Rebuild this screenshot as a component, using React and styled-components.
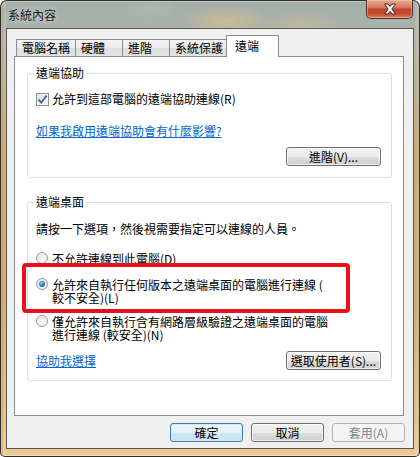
import styled, { createGlobalStyle } from "styled-components";

const Global = createGlobalStyle`
  html, body { margin: 0; padding: 0; overflow: hidden; background: #fff; }
  * { box-sizing: border-box; }
`;

const FONT = `"Noto Sans CJK TC", "Noto Sans", sans-serif`;

const tabs = [
  { label: "電腦名稱", w: 60 },
  { label: "硬體", w: 48 },
  { label: "進階", w: 48 },
  { label: "系統保護", w: 58 },
  { label: "遠端", w: 53, active: true },
];

// ventana con marco aero
export default function App() {
  return (
    <>
      <Global />
      <Window>
        <TitleBar>
          <Title>系統內容</Title>
          <CloseBtn>
            <svg width="14" height="12" viewBox="0 0 14 12">
              <path
                d="M1.5 1 L5 1 L7 3.6 L9 1 L12.5 1 L8.8 6 L12.5 11 L9 11 L7 8.4 L5 11 L1.5 11 L5.2 6 Z"
                fill="#fff"
                stroke="#3a2a2a"
                strokeWidth="1"
                strokeLinejoin="round"
              />
            </svg>
          </CloseBtn>
        </TitleBar>
        <Client>
          <TabRow>
            {tabs.map((t) => (
              <Tab key={t.label} $w={t.w} $active={t.active}>
                {t.label}
              </Tab>
            ))}
          </TabRow>
          <Panel>
            <Group>
              <GroupLabel>遠端協助</GroupLabel>
              <CheckRow>
                <CheckBox>
                  <svg width="11" height="11" viewBox="0 0 11 11">
                    <path
                      d="M1.5 5.5 L4.2 8.6 L9.6 1.6"
                      fill="none"
                      stroke="#4a5f9c"
                      strokeWidth="1.9"
                    />
                  </svg>
                </CheckBox>
                允許到這部電腦的遠端協助連線(R)
              </CheckRow>
              <Link $mt={18}>如果我啟用遠端協助會有什麼影響?</Link>
              <ButtonLine $mt={9}>
                <Btn $w={95}>進階(V)...</Btn>
              </ButtonLine>
            </Group>

            <Group $mt={24} $pb={10}>
              <GroupLabel>遠端桌面</GroupLabel>
              <Text $mt={13}>請按一下選項，然後視需要指定可以連線的人員。</Text>
              <Option $mt={16}>
                <Radio />
                <OptionText>不允許連線到此電腦(D)</OptionText>
              </Option>
              <Option $mt={12} $multi>
                <Radio $checked />
                <OptionText $multi>
                  <Line>允許來自執行任何版本之遠端桌面的電腦進行連線 (</Line>
                  <Line>較不安全)(L)</Line>
                </OptionText>
                <Highlight />
              </Option>
              <Option $mt={11} $multi>
                <Radio />
                <OptionText $multi>
                  <Line>僅允許來自執行含有網路層級驗證之遠端桌面的電腦</Line>
                  <Line>進行連線 (較安全)(N)</Line>
                </OptionText>
              </Option>
              <SplitLine $mt={10}>
                <Link>協助我選擇</Link>
                <Btn $w={95}>選取使用者(S)...</Btn>
              </SplitLine>
            </Group>
          </Panel>
          <Footer>
            <Btn $w={73} $primary>
              確定
            </Btn>
            <Btn $w={73}>取消</Btn>
            <Btn $w={73} disabled>
              套用(A)
            </Btn>
          </Footer>
        </Client>
      </Window>
    </>
  );
}

const Window = styled.div`
  width: 420px;
  height: 457px;
  display: flex;
  flex-direction: column;
  border: 1px solid rgba(35, 30, 25, 0.9);
  border-radius: 7px 7px 5px 5px;
  box-shadow: inset 0 0 0 1px rgba(255, 255, 255, 0.35);
  font-family: ${FONT};
  font-size: 12px;
  color: #000;
  background:
    radial-gradient(ellipse 45px 16px at 225px 20px, rgba(212, 188, 146, 0.85), transparent),
    radial-gradient(ellipse 40px 14px at 300px 24px, rgba(200, 186, 152, 0.7), transparent),
    radial-gradient(ellipse 30px 12px at 150px 8px, rgba(180, 190, 182, 0.6), transparent),
    linear-gradient(
      to right,
      rgba(120, 85, 40, 0.35) 0,
      rgba(255, 240, 200, 0.25) 3px,
      transparent 6px,
      transparent 413px,
      rgba(255, 240, 200, 0.25) 416px,
      rgba(120, 85, 40, 0.35) 100%
    ),
    linear-gradient(
      to bottom,
      #a2aea9 0,
      #a9b3ac 28px,
      #b0ac92 80px,
      #c6a16a 150px,
      #caa46a 300px,
      #dfbd84 420px,
      #ebcd97 100%
    );
`;

const TitleBar = styled.div`
  height: 27px;
  display: flex;
  justify-content: space-between;
  align-items: flex-start;
  padding-left: 7px;
`;

const Title = styled.div`
  margin-top: 7px;
  line-height: 14px;
  color: #1b1b1b;
  text-shadow: 0 0 6px rgba(255, 255, 255, 0.8);
`;

const CloseBtn = styled.div`
  width: 47px;
  height: 19px;
  margin: -1px 6px 0 0;
  display: flex;
  align-items: center;
  justify-content: center;
  border: 1px solid #4a2f2a;
  border-top: none;
  border-radius: 0 0 5px 5px;
  box-shadow: inset 0 0 0 1px rgba(255, 210, 190, 0.45);
  background: linear-gradient(
    to bottom,
    #e6a893 0,
    #d37b63 40%,
    #c2452a 52%,
    #c4492d 75%,
    #d8805f 100%
  );
`;

const Client = styled.div`
  flex: 1;
  margin: 0 5px 7px;
  border: 1px solid #5d564a;
  background: #f0f0f0;
  display: flex;
  flex-direction: column;
`;

const TabRow = styled.div`
  display: flex;
  align-items: flex-end;
  height: 21px;
  margin-top: 6px;
  padding-left: 9px;
  position: relative;
  z-index: 1;
`;

const Tab = styled.div`
  width: ${(p) => p.$w}px;
  height: ${(p) => (p.$active ? 22 : 17)}px;
  margin-bottom: ${(p) => (p.$active ? -1 : 0)}px;
  padding-left: ${(p) => (p.$active ? 8 : 5)}px;
  border: 1px solid #898c95;
  border-bottom: none;
  line-height: ${(p) => (p.$active ? 19 : 16)}px;
  white-space: nowrap;
  background: ${(p) =>
    p.$active
      ? "#fff"
      : "linear-gradient(to bottom, #f3f3f3 0, #ebebeb 50%, #dedede 51%, #e4e4e4 100%)"};
  & + & {
    margin-left: -1px;
  }
`;

const Panel = styled.div`
  height: 360px;
  margin: 0 9px 0 7px;
  border: 1px solid #898c95;
  background: #fff;
  padding: 16px 11px 0 12px;
  display: flex;
  flex-direction: column;
`;

const Group = styled.div`
  margin-top: ${(p) => p.$mt || 0}px;
  border: 1px solid #d5dfe5;
  border-radius: 3px;
  padding: 0 10px ${(p) => p.$pb ?? 11}px 8px;
  display: flex;
  flex-direction: column;
`;

const GroupLabel = styled.div`
  align-self: flex-start;
  margin: -8px 0 0 -2px;
  padding: 0 2px;
  background: #fff;
  line-height: 14px;
  height: 14px;
`;

const CheckRow = styled.div`
  display: flex;
  align-items: center;
  gap: 3px;
  margin-top: 12px;
  height: 14px;
  line-height: 14px;
`;

const CheckBox = styled.span`
  width: 13px;
  height: 13px;
  border: 1px solid #8e8f8f;
  background: linear-gradient(135deg, #dcdcdc 0, #f6f6f6 70%, #fff 100%);
  box-shadow: inset 0 0 0 1px #f4f4f4;
  display: flex;
  align-items: center;
  justify-content: center;
`;

const Link = styled.a`
  display: block;
  margin-top: ${(p) => p.$mt || 0}px;
  color: #0066cc;
  text-decoration: underline;
  text-underline-offset: 1px;
  line-height: 14px;
  cursor: pointer;
`;

const ButtonLine = styled.div`
  margin-top: ${(p) => p.$mt || 0}px;
  display: flex;
  justify-content: flex-end;
`;

const SplitLine = styled.div`
  margin-top: ${(p) => p.$mt || 0}px;
  display: flex;
  justify-content: space-between;
  align-items: center;
`;

const Text = styled.div`
  margin-top: ${(p) => p.$mt || 0}px;
  line-height: 14px;
`;

const Option = styled.div`
  position: relative;
  margin-top: ${(p) => p.$mt || 0}px;
  display: flex;
  align-items: flex-start;
  gap: 4px;
`;

const OptionText = styled.div`
  line-height: ${(p) => (p.$multi ? 13 : 14)}px;
  white-space: nowrap;
`;

const Line = styled.div`
  height: 13px;
`;

const Radio = styled.span`
  flex: none;
  position: relative;
  width: 12px;
  height: 12px;
  border-radius: 50%;
  border: 1px solid #9a9a9a;
  background: radial-gradient(circle at 60% 65%, #ffffff 0, #e8e8e8 55%, #cfcfcf 100%);
  box-shadow: inset 0 0 0 1px #f4f4f4;
  &::after {
    content: "";
    display: ${(p) => (p.$checked ? "block" : "none")};
    position: absolute;
    left: 2px;
    top: 2px;
    width: 6px;
    height: 6px;
    border-radius: 50%;
    background: radial-gradient(circle at 40% 35%, #8fd0f7 0, #2a78c0 50%, #163f7a 100%);
  }
`;

const Highlight = styled.span`
  position: absolute;
  left: -14px;
  top: -15px;
  width: 328px;
  height: 50px;
  border: 4px solid #e8121c;
  border-radius: 4px;
  pointer-events: none;
`;

const Footer = styled.div`
  display: flex;
  justify-content: flex-end;
  gap: 8px;
  padding: 7px 8px 0 0;
`;

const Btn = styled.button`
  width: ${(p) => p.$w}px;
  height: 19px;
  padding: 0;
  font-family: ${FONT};
  font-size: 12px;
  line-height: 15px;
  color: #000;
  border-radius: 3px;
  border: 1px solid ${(p) => (p.$primary ? "#3c7fb1" : "#707070")};
  box-shadow: inset 0 0 0 1px
    ${(p) => (p.$primary ? "rgba(200, 235, 252, 0.9)" : "rgba(255, 255, 255, 0.7)")};
  background: ${(p) =>
    p.$primary
      ? "linear-gradient(to bottom, #eef6fb 0, #e3eff8 50%, #d3e7f5 51%, #c9e1f2 100%)"
      : "linear-gradient(to bottom, #f2f2f2 0, #ebebeb 50%, #dddddd 51%, #cfcfcf 100%)"};
  &:disabled {
    color: #838383;
    border-color: #adb2b5;
    box-shadow: none;
    background: #f4f4f4;
  }
`;
